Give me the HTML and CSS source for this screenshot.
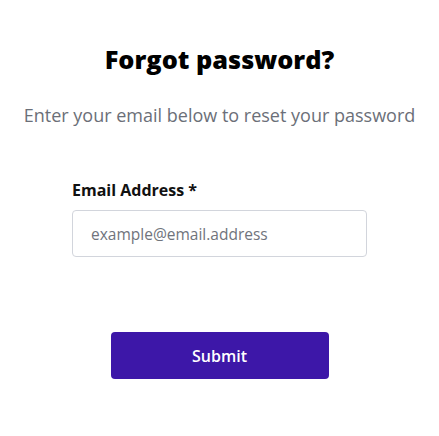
FILE: index.html
```html
<!DOCTYPE html>
<html>

<head>
    <meta charset="utf-8" />
    <title>Forgot password</title>
    <link rel="stylesheet" href="styles.css">
</head>

<body>
    <div class="resetBox">
        <h1 class="title">Forgot password?</h1>
        <p class="subtitle">Enter your email below to reset your password</p>
        <!-- 邮箱表单 -->
        <form class="resetForm">
            <label for="email">Email Address *</label>
            <input type="email" id="email" placeholder="example@email.address">
            <button type="submit">Submit</button>
        </form>
    </div>
</body>

</html>
```

FILE: styles.css
```css
body {
    margin: 0;
    background-color: #fff;
    font-family: "Open Sans", "Noto Sans", sans-serif;
}

.resetBox {
    display: flex;
    flex-direction: column;
    align-items: center;
    padding-top: 41px;
}

.resetBox .title {
    margin: 0;
    font-size: 25.3px;
    line-height: 36px;
    font-weight: 800;
    color: #000;
}

.resetBox .subtitle {
    margin: 24px 0 0;
    font-size: 18px;
    line-height: 28px;
    color: #6b6f78;
}

.resetForm {
    display: flex;
    flex-direction: column;
    width: 295px;
    margin-top: 49px;
}

.resetForm label {
    font-size: 16px;
    line-height: 24px;
    font-weight: 700;
    color: #111;
}

.resetForm input {
    box-sizing: border-box;
    height: 47px;
    margin-top: 8px;
    padding: 0 18px;
    border: 1px solid #d2d5dc;
    border-radius: 4px;
    font-family: inherit;
    font-size: 15.5px;
    color: #333;
}

.resetForm input::placeholder {
    color: #70747c;
}

.resetForm button {
    align-self: center;
    width: 218px;
    height: 47px;
    margin-top: 75px;
    border: 0;
    border-radius: 4px;
    background-color: #3d17a8;
    color: #fff;
    font-family: inherit;
    font-size: 16px;
    font-weight: 600;
}
```
